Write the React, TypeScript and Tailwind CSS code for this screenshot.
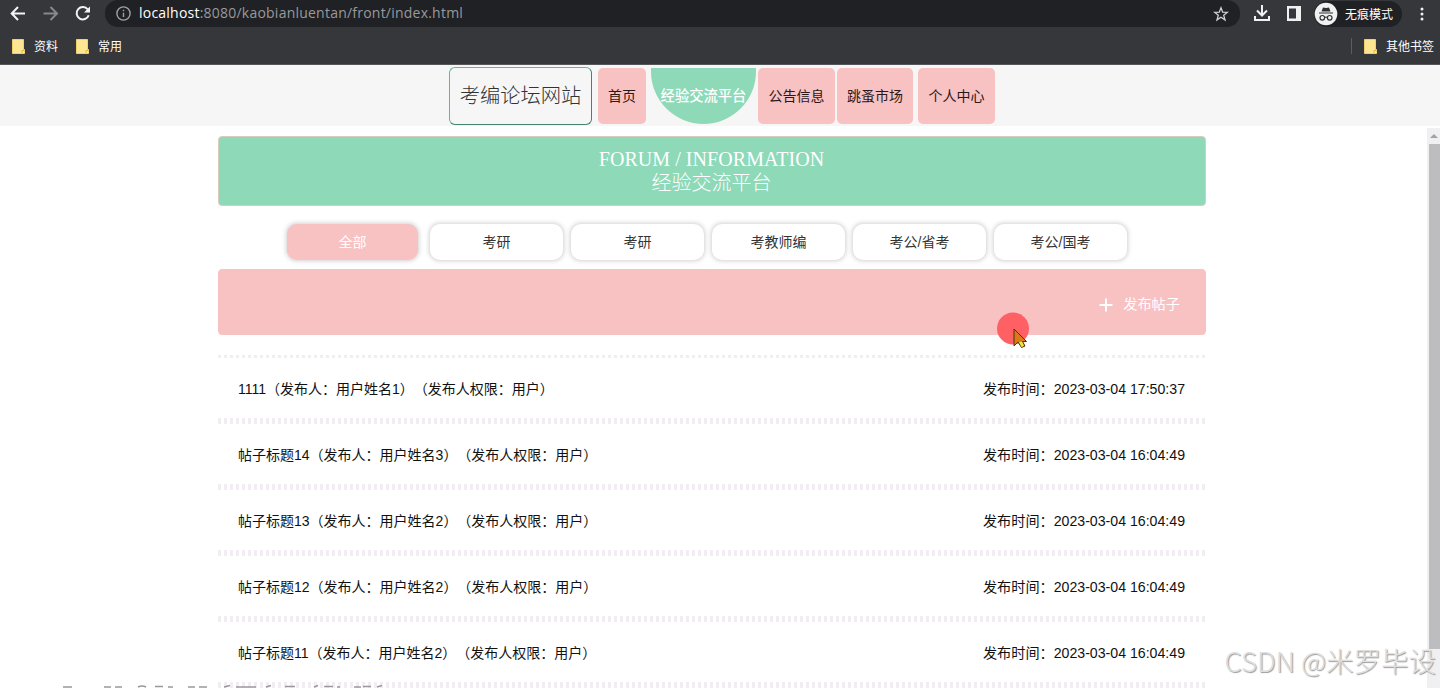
import React from 'react';

const posts = [
  ['1111', '用户姓名1', '2023-03-04 17:50:37'],
  ['帖子标题14', '用户姓名3', '2023-03-04 16:04:49'],
  ['帖子标题13', '用户姓名2', '2023-03-04 16:04:49'],
  ['帖子标题12', '用户姓名2', '2023-03-04 16:04:49'],
  ['帖子标题11', '用户姓名2', '2023-03-04 16:04:49'],
];

const tabs = ['全部', '考研', '考研', '考教师编', '考公/省考', '考公/国考'];

function Folder() {
  return (
    <svg width="13" height="15" viewBox="0 0 13 15" className="shrink-0">
      <path d="M0.5 0.5H11.5V10.5H12.5V14.5H0.5Z" fill="#fde591" stroke="#f0d06c" strokeWidth="1" />
      <path d="M10 14V11.5H12" fill="none" stroke="#e3b93f" strokeWidth="1" />
    </svg>
  );
}

function Browser() {
  return (
    <header className="h-[65px] shrink-0 border-b border-[#55565a] bg-[#36373b] font-['Noto_Sans','Noto_Sans_CJK_SC',sans-serif] text-[12px] text-white">
      <div className="flex h-[27px] items-center">
        <svg width="105" height="27" viewBox="0 0 105 27" fill="none" strokeWidth="2" className="shrink-0">
          <path d="M25 13.5H12M18 7L11.700 13.500L18 20" stroke="#f4f4f5" />
          <path d="M43.500 13.500H56.500M50.500 7L57 13.500L50.500 20" stroke="#87888b" />
          <path d="M87.800 9.500A6.200 6.200 0 1 0 88.700 15.200" stroke="#f4f4f5" />
          <path d="M90 6.500V12.500H84Z" fill="#f4f4f5" />
        </svg>
        <div className="flex h-[27px] w-[1135px] shrink-0 items-center rounded-[13px] bg-[#202124] pl-[11px] pr-[11px]">
          <svg width="15" height="15" viewBox="0 0 15 15" fill="none" stroke="#a0a1a4" strokeWidth="1.400">
            <circle cx="7.500" cy="7.500" r="6.600" />
            <path d="M7.500 6.700V11M7.500 3.800V5.300" />
          </svg>
          <span className="-mt-px ml-[8px] font-['Open_Sans','Noto_Sans',sans-serif] text-[14px] leading-5 tracking-[0.225px] text-[#98999c]">
            <span className="text-white">localhost</span>:8080/kaobianluentan/front/index.html
          </span>
          <svg width="16" height="16" viewBox="0 0 16 16" className="ml-auto" fill="none" stroke="#d0d1d3" strokeWidth="1.300">
            <path d="M8 1.800L9.700 6.200L14.300 6.400L10.700 9.300L12 13.900L8 11.300L4 13.900L5.300 9.300L1.700 6.400L6.300 6.200Z" />
          </svg>
        </div>
        <svg width="64" height="27" viewBox="0 0 64 27" fill="none" stroke="#f1f1f2" strokeWidth="2" className="shrink-0">
          <path d="M22 5V15M17 10.500L22 15.500L27 10.500M15 16V20H29V16" />
          <path d="M47 6H61V21H47ZM49 8.500V18.500H56V8.500Z" fill="#f1f1f2" stroke="none" fillRule="evenodd" />
        </svg>
        <div className="ml-[10px] flex h-[26px] w-[88px] shrink-0 items-center rounded-full bg-[#202124]">
          <svg width="24" height="24" viewBox="0 0 24 24" className="shrink-0">
            <circle cx="12" cy="12" r="11.300" fill="#f1f1f2" />
            <path d="M7.500 9.500L9 5.500L12 6L15 5.500L16.500 9.500Z" fill="#303135" />
            <g fill="none" stroke="#303135" strokeWidth="1.200">
              <path d="M5 11H19M10.500 15.500Q12 14.500 13.500 15.500" />
              <circle cx="8.300" cy="15.800" r="2.300" />
              <circle cx="15.700" cy="15.800" r="2.300" />
            </g>
          </svg>
          <span className="ml-[7px] mt-[2px] whitespace-nowrap">无痕模式</span>
        </div>
        <svg width="6" height="16" viewBox="0 0 6 16" fill="#f1f1f2" className="ml-[17px] shrink-0">
          <circle cx="3" cy="3" r="1.500" /><circle cx="3" cy="8" r="1.500" /><circle cx="3" cy="13" r="1.500" />
        </svg>
      </div>
      <div className="flex h-[38px] items-center pl-[12px] pr-[6px]">
        <Folder />
        <span className="ml-[9px] mt-px">资料</span>
        <span className="ml-[18px] flex"><Folder /></span>
        <span className="ml-[9px] mt-px">常用</span>
        <span className="ml-auto mr-[12px] h-[16px] w-px bg-[#5c5d61]" />
        <Folder />
        <span className="ml-[9px] mt-px">其他书签</span>
      </div>
    </header>
  );
}

function Dots({ thin = false }: { thin?: boolean }) {
  return (
    <div className={`w-full shrink-0 bg-[repeating-linear-gradient(90deg,#f1edf2_0_3px,transparent_3px_6px)] ${thin ? 'h-[3px]' : 'h-[6px]'}`} />
  );
}

function NavItem({ label, className }: { label: string; className: string }) {
  return (
    <a className={`flex h-[56px] shrink-0 items-center justify-center rounded-[5px] bg-[#f8c1c2] ${className}`}>{label}</a>
  );
}

export default function App() {
  return (
    <div className="relative flex h-[688px] w-[1440px] flex-col overflow-hidden bg-white font-['Liberation_Sans','Noto_Sans_CJK_SC',sans-serif] text-[14px] text-[#111] [text-spacing-trim:space-all]">
      <Browser />
      <nav className="flex h-[61px] shrink-0 items-start bg-[#f6f6f6] pl-[449px] pt-[2px] text-[#2b1818]">
        <div className="flex h-[58px] w-[143px] shrink-0 items-center justify-center rounded-[6px] border border-[#66b594] border-b-[#47836c] border-r-[#47836c] text-[20.300px] font-light text-[#333]">考编论坛网站</div>
        <div className="flex pt-px">
          <NavItem label="首页" className="ml-[6px] w-[48px]" />
          <a className="ml-[5px] flex h-[56px] w-[105px] shrink-0 items-center justify-center rounded-b-full bg-[#8dd9b8] pt-[2px] text-white">
            <span className="whitespace-nowrap text-[14.300px] font-medium">经验交流平台</span>
          </a>
          <NavItem label="公告信息" className="ml-[2px] w-[77px]" />
          <NavItem label="跳蚤市场" className="ml-[2px] w-[76px]" />
          <NavItem label="个人中心" className="ml-[5px] w-[77px]" />
        </div>
      </nav>
      <div className="flex min-h-0 flex-1">
        <main className="ml-[218px] w-[988px] shrink-0 pt-[10px]">
          <section className="flex h-[70px] flex-col items-center rounded-[4px] border border-[#d8cdbd] bg-[#8dd9b8] pr-[1px] pt-[11px] font-['Liberation_Serif','Noto_Sans_CJK_SC',serif] text-[20px] leading-[23px] text-white">
            <h1 className="tracking-[0.050px]">FORUM / INFORMATION</h1>
            <h2 className="mt-px font-light">经验交流平台</h2>
          </section>
          <div className="flex gap-[8px] pl-[69px] pt-[18px] text-[#333]">
            {tabs.map((tab, i) => (
              <button
                key={i}
                className={`flex h-[36px] shrink-0 items-center justify-center rounded-[10px] shadow-[0_0_4px_1px_rgba(110,95,110,0.300)] ${i === 0 ? 'mr-[4px] w-[131px] bg-[#f8c1c2] text-white' : 'w-[133px] bg-white'}`}
              >
                {tab}
              </button>
            ))}
          </div>
          <div className="mt-[9px] flex h-[66px] items-center justify-end rounded-[4px] border border-[#f5c3c4] bg-[#f8c1c2] pr-[25px] pt-[5px] text-white">
            <svg width="14" height="14" viewBox="0 0 14 14" stroke="white" strokeWidth="2"><path d="M7 0.500V13.500M0.500 7H13.500" /></svg>
            <span className="ml-[10px] text-[14.200px]">发布帖子</span>
          </div>
          <div className="mt-[20px]">
            <Dots thin />
            {posts.map(([title, user, time]) => (
              <article key={title}>
                <div className="flex h-[60px] items-center justify-between whitespace-nowrap pl-[20px] pr-[21px] pt-[3px]">
                  <span>{title}（发布人：{user}）（发布人权限：用户）</span>
                  <time className="text-[14.150px]">发布时间：{time}</time>
                </div>
                <Dots />
              </article>
            ))}
          </div>
        </main>
        <aside className="ml-auto mt-[2px] flex w-[13px] shrink-0 flex-col items-center bg-[#f0f0f2]">
          <svg width="13" height="16" viewBox="0 0 13 16"><path d="M3 10L7 6L11 10Z" fill="#a3a3a3" /></svg>
          <div className="ml-[2px] h-[505px] w-[11px] bg-[#bdbdbf]" />
        </aside>
      </div>
      <div className="absolute left-[997px] top-[312px] h-[36px] w-[36px]">
        <svg width="36" height="36" viewBox="0 0 36 36">
          <circle cx="16" cy="16.500" r="16" fill="#ff6063" />
          <path d="M17 17V34L21 30L24.500 35.500L28 34L25.500 29.500H29.500Z" fill="#d97918" stroke="#54300c" strokeWidth="1" />
          <path d="M22 30L24.500 35L27 33.700L25 29.700Z" fill="#e6ed38" />
        </svg>
      </div>
      <svg className="absolute bottom-0 left-[60px]" width="330" height="4" viewBox="0 0 330 4" fill="none" stroke="#999" strokeWidth="1.600">
        <path d="M3 3H12M44 3H51M55 3H62M78 3Q82 1 86 3M95 2.500H103M108 3H113M128 3H135M139 3H147M164 3L170 1.500M176 3H196M206 3L211 1.500M225 2.500H235M254 3L258 1.500M264 2.500H273M277 3H280M294 3H301M303 2.500H311M317 3L322 1.500" />
      </svg>
      <div className="absolute right-[4px] top-[642px] whitespace-nowrap font-['Noto_Sans_CJK_SC',sans-serif] text-[27.500px] font-light leading-[36px] text-[#dedede] [text-shadow:1px_1px_1px_#999]">CSDN @米罗毕设</div>
    </div>
  );
}
